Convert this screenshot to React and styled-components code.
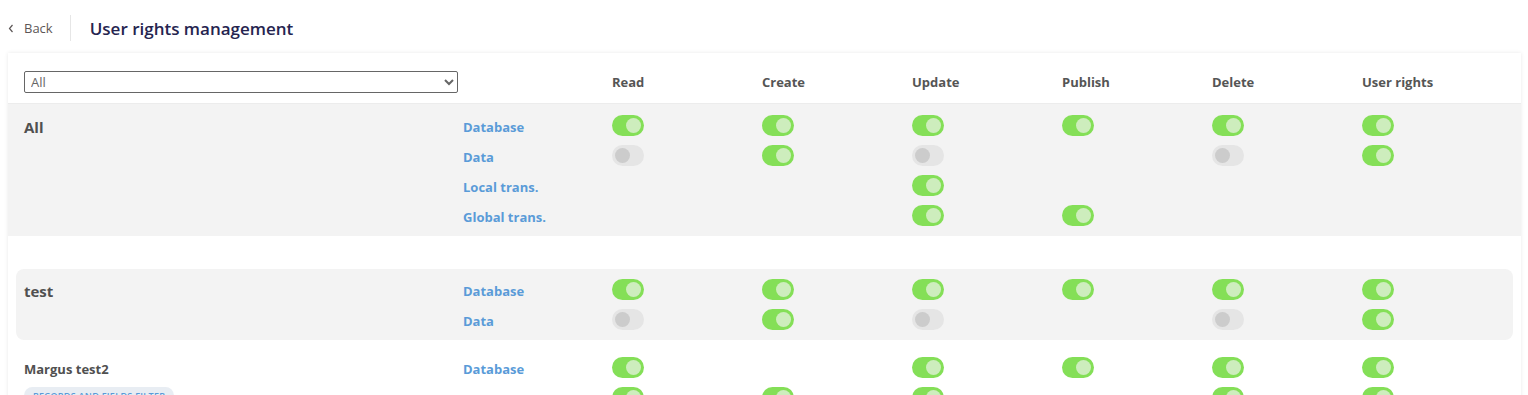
import React from 'react';
import styled, { createGlobalStyle, css } from 'styled-components';

const GlobalStyle = createGlobalStyle`
  body {
    margin: 0;
    background: #ffffff;
    font-family: "Open Sans", "Noto Sans", sans-serif;
  }
`;

const COLUMNS = ['Read', 'Create', 'Update', 'Publish', 'Delete', 'User rights'];

// null = no toggle, true = on, false = off
const groups = [
  {
    name: 'All',
    variant: 'full',
    rows: [
      { label: 'Database', values: [true, true, true, true, true, true] },
      { label: 'Data', values: [false, true, false, null, false, true] },
      { label: 'Local trans.', values: [null, null, true, null, null, null] },
      { label: 'Global trans.', values: [null, null, true, true, null, null] },
    ],
  },
  {
    name: 'test',
    variant: 'boxed',
    rows: [
      { label: 'Database', values: [true, true, true, true, true, true] },
      { label: 'Data', values: [false, true, false, null, false, true] },
    ],
  },
  {
    name: 'Margus test2',
    variant: 'plain',
    badge: 'Records and fields filter',
    rows: [
      { label: 'Database', values: [true, null, true, true, true, true] },
      { label: 'Data', values: [true, true, true, null, true, true] },
    ],
  },
];

const Page = styled.div`
  padding: 0 7px 0 8px;
`;

const TopBar = styled.div`
  display: flex;
  align-items: center;
  padding-top: 15px;
  margin-bottom: 12px;
`;

const BackLink = styled.a`
  display: flex;
  align-items: center;
  gap: 10px;
  font-size: 13px;
  color: #5c5656;
  padding-right: 17px;
  border-right: 1px solid #e6e6e6;
  height: 26px;
  cursor: pointer;
`;

const Title = styled.h1`
  margin: 0 0 0 19px;
  font-size: 17px;
  font-weight: 600;
  color: #25244f;
`;

const Card = styled.div`
  background: #fff;
  box-shadow: 0 0 4px rgba(0, 0, 0, 0.09);
  min-height: 400px;
`;

const HeaderRow = styled.div`
  box-sizing: border-box;
  display: flex;
  align-items: center;
  height: 51px;
  padding: 8px 0 0 16px;
  border-bottom: 1px solid #ececec;
`;

const FilterSelect = styled.select`
  width: 434px;
  height: 22px;
  margin-right: 5px;
  font-family: "Open Sans", "Noto Sans", sans-serif;
  font-size: 13px;
  color: #666;
  border: 1px solid #666;
  border-radius: 2px;
  background: #fff;
  padding: 0 2px;
`;

const Spacer = styled.div`
  width: 149px;
`;

const ColHead = styled.div`
  width: 150px;
  font-size: 13px;
  font-weight: 700;
  color: #555;
`;

const Group = styled.div`
  display: flex;
  background: #f3f3f3;
  ${({ $variant }) =>
    $variant === 'full' &&
    css`
      padding: 8px 0 4px 16px;
      margin-bottom: 33px;
    `}
  ${({ $variant }) =>
    $variant === 'boxed' &&
    css`
      margin: 0 8px;
      border-radius: 8px;
      padding: 7px 0 4px 8px;
    `}
  ${({ $variant }) =>
    $variant === 'plain' &&
    css`
      background: transparent;
      padding: 14px 0 4px 16px;
    `}
`;

const NameCell = styled.div`
  width: 439px;
  display: flex;
  flex-direction: column;
  align-items: flex-start;
`;

const GroupName = styled.div`
  line-height: 30px;
  font-size: ${({ $small }) => ($small ? '13px' : '15px')};
  font-weight: 700;
  color: #505050;
`;

const Badge = styled.span`
  margin-top: 3px;
  padding: 2px 9px;
  border-radius: 10px;
  background: #e8edf3;
  color: #5a9bd8;
  font-size: 9px;
  font-weight: 600;
  letter-spacing: 0.3px;
  text-transform: uppercase;
`;

const Rows = styled.div`
  display: flex;
  flex-direction: column;
`;

const Row = styled.div`
  display: flex;
  align-items: center;
  height: 30px;
`;

const RowLabel = styled.div`
  width: 149px;
  font-size: 13px;
  font-weight: 700;
  color: #5a9bd8;
`;

const Cell = styled.div`
  width: 150px;
  display: flex;
  align-items: center;
  margin-top: -3px;
`;

const Toggle = styled.span`
  position: relative;
  display: inline-block;
  width: 32px;
  height: 21px;
  border-radius: 11px;
  background: ${({ $on }) => ($on ? '#84df57' : '#e5e5e5')};
  cursor: pointer;

  &::after {
    content: '';
    position: absolute;
    top: 3px;
    left: ${({ $on }) => ($on ? '14px' : '3px')};
    width: 15px;
    height: 15px;
    border-radius: 50%;
    background: ${({ $on }) => ($on ? '#cdedbd' : '#cccccc')};
  }
`;

const App = () => {
  return (
    <Page>
      <GlobalStyle />
      <TopBar>
        <BackLink>
          <svg width="6" height="9" viewBox="0 0 6 9">
            <path d="M4.5 1 L1.5 4.5 L4.5 8" fill="none" stroke="#5c5656" strokeWidth="1.2" />
          </svg>
          Back
        </BackLink>
        <Title>User rights management</Title>
      </TopBar>
      <Card>
        <HeaderRow>
          <FilterSelect defaultValue="All">
            <option>All</option>
          </FilterSelect>
          <Spacer />
          {COLUMNS.map((c) => (
            <ColHead key={c}>{c}</ColHead>
          ))}
        </HeaderRow>
        {groups.map((g) => (
          <Group key={g.name} $variant={g.variant}>
            <NameCell>
              <GroupName $small={g.variant === 'plain'}>{g.name}</GroupName>
              {g.badge && <Badge>{g.badge}</Badge>}
            </NameCell>
            <Rows>
              {g.rows.map((r) => (
                <Row key={r.label}>
                  <RowLabel>{r.label}</RowLabel>
                  {r.values.map((v, i) => (
                    <Cell key={i}>{v !== null && <Toggle $on={v} />}</Cell>
                  ))}
                </Row>
              ))}
            </Rows>
          </Group>
        ))}
      </Card>
    </Page>
  );
};

export default App;
